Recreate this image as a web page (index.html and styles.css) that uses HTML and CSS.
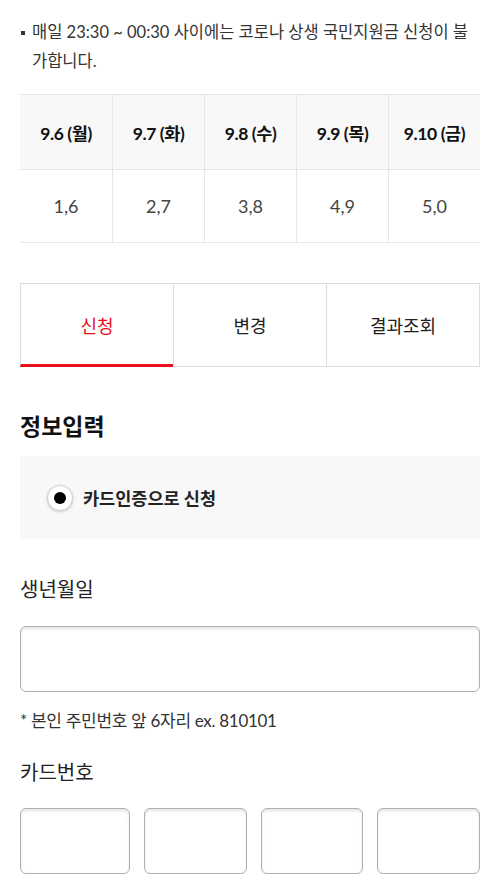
FILE: index.html
```html
<!DOCTYPE html>
<html lang="ko">
<head>
<meta charset="utf-8">
<title>신청</title>
<link rel="stylesheet" href="styles.css">
</head>
<body>
<div class="page">
  <div class="notice">
    <span class="dot"></span>
    <p class="notice-text">매일 23:30 ~ 00:30 사이에는 코로나 상생 국민지원금 신청이 불가합니다.</p>
  </div>

  <div class="schedule">
    <div class="cell head first">9.6 (월)</div>
    <div class="cell head">9.7 (화)</div>
    <div class="cell head">9.8 (수)</div>
    <div class="cell head">9.9 (목)</div>
    <div class="cell head">9.10 (금)</div>
    <div class="cell body first">1,6</div>
    <div class="cell body">2,7</div>
    <div class="cell body">3,8</div>
    <div class="cell body">4,9</div>
    <div class="cell body">5,0</div>
  </div>

  <div class="tabs">
    <div class="tab active">신청</div>
    <div class="tab">변경</div>
    <div class="tab">결과조회</div>
  </div>

  <h2 class="section-title">정보입력</h2>

  <div class="method">
    <span class="radio"><span class="radio-dot"></span></span>
    <span class="method-label">카드인증으로 신청</span>
  </div>

  <div class="field-label birth-label">생년월일</div>
  <div class="input wide"></div>
  <div class="hint">* 본인 주민번호 앞 6자리 ex. 810101</div>

  <div class="field-label card-label">카드번호</div>
  <div class="card-inputs">
    <div class="input"></div>
    <div class="input"></div>
    <div class="input"></div>
    <div class="input"></div>
  </div>
</div>
</body>
</html>
```

FILE: styles.css
```css
* { box-sizing: border-box; }
html, body { margin: 0; padding: 0; background: #fff; }
body {
  font-family: "Lato", "Noto Sans CJK KR", sans-serif;
  color: #333;
}
.page {
  width: 500px;
  padding: 18px 20px 0;
}
.notice {
  display: flex;
  align-items: flex-start;
  gap: 7px;
}
.dot {
  flex: none;
  width: 4px;
  height: 4px;
  background: #333;
  margin-top: 13px;
  margin-left: 1px;
}
.notice-text {
  margin: 0;
  font-size: 16.5px;
  line-height: 29px;
  color: #333;
}
.schedule {
  margin-top: 18px;
  display: grid;
  grid-template-columns: repeat(5, 1fr);
  border-top: 1px solid #e6e6e6;
}
.cell {
  display: flex;
  align-items: center;
  justify-content: center;
  border-bottom: 1px solid #e6e6e6;
  border-left: 1px solid #e6e6e6;
}
.cell.first { border-left: none; }
.cell.head {
  height: 75px;
  background: #f8f8f8;
  font-weight: 700;
  font-size: 17.5px;
  letter-spacing: -0.4px;
  color: #111;
}
.cell.body {
  height: 73px;
  font-size: 18px;
  color: #444;
}
.tabs {
  margin-top: 40px;
  display: flex;
  border-top: 1px solid #ddd;
  border-right: 1px solid #ddd;
}
.tab {
  flex: 1;
  height: 83px;
  display: flex;
  align-items: center;
  justify-content: center;
  border-left: 1px solid #ddd;
  border-bottom: 1px solid #ddd;
  font-size: 18px;
  color: #222;
}
.tab.active {
  color: #e8101a;
  border-bottom: 3px solid #e8101a;
  padding-top: 2px;
}
.section-title {
  margin: 44px 0 0;
  font-size: 23px;
  line-height: 30px;
  font-weight: 700;
  color: #111;
}
.method {
  margin-top: 15px;
  height: 83px;
  background: #f8f8f8;
  display: flex;
  align-items: center;
  padding-left: 27px;
  gap: 10px;
}
.radio {
  width: 26px;
  height: 26px;
  border-radius: 50%;
  background: #fff;
  border: 1px solid #cfcfcf;
  box-shadow: 0 1px 3px rgba(0,0,0,0.18);
  display: flex;
  align-items: center;
  justify-content: center;
}
.radio-dot {
  width: 12px;
  height: 12px;
  border-radius: 50%;
  background: #000;
}
.method-label {
  font-size: 17.5px;
  font-weight: 700;
  color: #222;
}
.field-label {
  font-size: 20px;
  line-height: 28px;
  color: #222;
}
.birth-label { margin-top: 36px; }
.card-label { margin-top: 25px; }
.input {
  height: 66px;
  border: 1.5px solid #b0b0b0;
  border-radius: 6px;
  background: #fff;
  box-shadow: inset 0 2px 3px rgba(0,0,0,0.10);
}
.input.wide { margin-top: 23px; }
.hint {
  margin-top: 17px;
  font-size: 17px;
  line-height: 24px;
  color: #333;
  letter-spacing: -0.3px;
}
.card-inputs {
  margin-top: 22px;
  display: grid;
  grid-template-columns: 110px 1fr 1fr 1fr;
  gap: 14px;
}
```
